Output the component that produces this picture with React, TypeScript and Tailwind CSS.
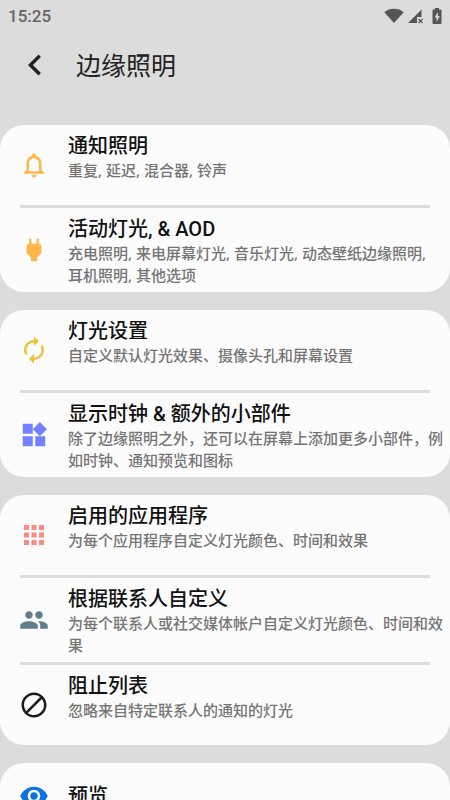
import type { IconType } from "react-icons";
import {
  MdApps,
  MdAutorenew,
  MdBlock,
  MdChevronLeft,
  MdNotificationsNone,
  MdPeople,
  MdPower,
  MdVisibility,
  MdWidgets,
} from "react-icons/md";

type Item = {
  title: string;
  summary?: string;
  icon: IconType;
  iconClass: string;
};

const GROUPS: Item[][] = [
  [
    {
      title: "通知照明",
      summary: "重复, 延迟, 混合器, 铃声",
      icon: MdNotificationsNone,
      iconClass: "text-[#ffb74d]",
    },
    {
      title: "活动灯光, & AOD",
      summary: "充电照明, 来电屏幕灯光, 音乐灯光, 动态壁纸边缘照明, 耳机照明, 其他选项",
      icon: MdPower,
      iconClass: "text-[#ffb74d]",
    },
  ],
  [
    {
      title: "灯光设置",
      summary: "自定义默认灯光效果、摄像头孔和屏幕设置",
      icon: MdAutorenew,
      iconClass: "text-[#f0c23c]",
    },
    {
      title: "显示时钟 & 额外的小部件",
      summary: "除了边缘照明之外，还可以在屏幕上添加更多小部件，例如时钟、通知预览和图标",
      icon: MdWidgets,
      iconClass: "text-[#7380ff]",
    },
  ],
  [
    {
      title: "启用的应用程序",
      summary: "为每个应用程序自定义灯光颜色、时间和效果",
      icon: MdApps,
      iconClass: "text-[#ff8a80]",
    },
    {
      title: "根据联系人自定义",
      summary: "为每个联系人或社交媒体帐户自定义灯光颜色、时间和效果",
      icon: MdPeople,
      iconClass: "text-[#607d8b]",
    },
    {
      title: "阻止列表",
      summary: "忽略来自特定联系人的通知的灯光",
      icon: MdBlock,
      iconClass: "text-[#1c1c1c]",
    },
  ],
  [
    {
      title: "预览",
      icon: MdVisibility,
      iconClass: "text-[#0a74dc]",
    },
  ],
];

function StatusBar() {
  return (
    <div className="flex h-8 shrink-0 items-center justify-between px-2 text-[#666]">
      <span className="text-[17px] font-medium leading-5">15:25</span>
      <div className="flex items-center text-[#555]">
        {/* Wifi */}
        <svg className="h-4 w-5" viewBox="0 0 20 16" fill="currentColor">
          <path d="M10 15 0.3 4.2C3 1.9 6.3 0.8 10 0.8s7 1.1 9.7 3.4z" />
        </svg>
        {/* Mobile signal, no data */}
        <svg className="ml-1 h-4 w-4" viewBox="0 0 16 16" fill="currentColor">
          <path d="M13.5 1.5V9H9v6H0z" />
          <path d="m10.5 11 4 4m0-4-4 4" fill="none" stroke="currentColor" strokeWidth="1.2" />
        </svg>
        {/* Battery, charging */}
        <svg className="ml-2 h-4 w-2.5" viewBox="0 0 10 16" fill="currentColor">
          <path
            fillRule="evenodd"
            d="M3 0h4v1.5h1.5a1 1 0 0 1 1 1V15a1 1 0 0 1-1 1h-7a1 1 0 0 1-1-1V2.5a1 1 0 0 1 1-1H3zM5.8 4 2.6 9.500h2V14l3.100-6H5.800z"
          />
        </svg>
      </div>
    </div>
  );
}

function SettingsRow({ item }: { item: Item }) {
  const Icon = item.icon;
  return (
    <a href="#" className={`flex items-center pl-[19px] pr-1.5 ${item.summary ? "min-h-20" : "min-h-[66px]"}`}>
      <Icon className={`size-[30px] shrink-0 ${item.iconClass}`} />
      <div className={`ml-[19px] min-w-0 flex-1 ${item.summary ? "self-start pt-[9px] pb-1.5" : ""}`}>
        <h2 className="text-xl font-medium leading-[25px] text-[#111]">{item.title}</h2>
        {item.summary && (
          <p className="font-['Noto_Sans','Noto_Sans_CJK_SC',sans-serif] text-[15px] font-medium leading-[22px] text-[#757575]">
            {item.summary}
          </p>
        )}
      </div>
    </a>
  );
}

export default function App() {
  return (
    <div className="flex h-screen flex-col overflow-hidden bg-[#dcdcdc] font-[Roboto,'Noto_Sans_CJK_SC',sans-serif]">
      <StatusBar />

      <header className="flex h-[66px] shrink-0 items-center pl-3.5">
        <button type="button" aria-label="返回" className="text-[#222]">
          <MdChevronLeft className="size-[42px]" />
        </button>
        <h1 className="ml-5 pt-1 text-[25px] leading-8 text-[#222]">边缘照明</h1>
      </header>

      <main className="mt-[27px] flex min-h-0 flex-1 flex-col gap-[18px] overflow-y-auto [scrollbar-width:none]">
        {GROUPS.map((group) => (
          <section key={group[0].title} className="shrink-0 rounded-3xl bg-[#fcfcfc]">
            {group.map((item, i) => (
              <div key={item.title}>
                {i > 0 && <hr className="mx-5 h-[3px] border-0 bg-[#dcdcdc]" />}
                <SettingsRow item={item} />
              </div>
            ))}
          </section>
        ))}
      </main>
    </div>
  );
}
